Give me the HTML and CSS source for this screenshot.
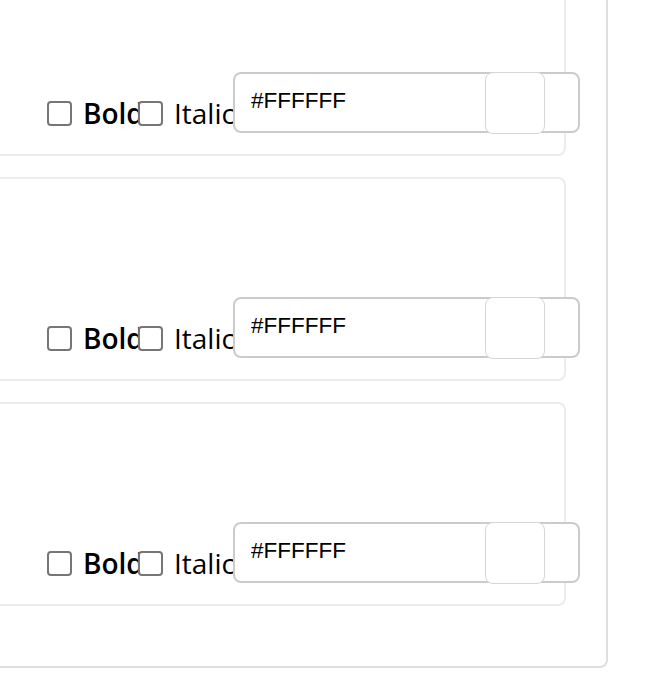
FILE: index.html
```html
<!DOCTYPE html>
<html>
<head>
<meta charset="utf-8">
<link rel="stylesheet" href="styles.css">
</head>
<body>
<div class="viewport">
  <div class="panel">
    <div class="card">
      <div class="row">
        <label class="opt"><input type="checkbox" class="cb"><span class="lbl bold">Bold</span></label>
        <label class="opt"><input type="checkbox" class="cb"><span class="lbl">Italic</span></label>
        <div class="color">
          <input type="text" class="hex" value="#FFFFFF">
          <span class="swatch"></span>
        </div>
      </div>
    </div>
    <div class="card">
      <div class="row">
        <label class="opt"><input type="checkbox" class="cb"><span class="lbl bold">Bold</span></label>
        <label class="opt"><input type="checkbox" class="cb"><span class="lbl">Italic</span></label>
        <div class="color">
          <input type="text" class="hex" value="#FFFFFF">
          <span class="swatch"></span>
        </div>
      </div>
    </div>
    <div class="card">
      <div class="row">
        <label class="opt"><input type="checkbox" class="cb"><span class="lbl bold">Bold</span></label>
        <label class="opt"><input type="checkbox" class="cb"><span class="lbl">Italic</span></label>
        <div class="color">
          <input type="text" class="hex" value="#FFFFFF">
          <span class="swatch"></span>
        </div>
      </div>
    </div>
  </div>
</div>
</body>
</html>
```

FILE: styles.css
```css
html, body {
  margin: 0;
  padding: 0;
  background: #fff;
}
.viewport {
  width: 653px;
  height: 681px;
  overflow: hidden;
  font-family: "Open Sans", "Noto Sans", sans-serif;
  color: #000;
}
.panel {
  box-sizing: border-box;
  width: 908px;
  margin-left: -300px;
  margin-top: -70px;
  border: 2px solid #dedede;
  border-radius: 8px;
  padding: 20px 40px 60px 20px;
  display: flex;
  flex-direction: column;
  gap: 21px;
}
.card {
  box-sizing: border-box;
  height: 204px;
  border: 2px solid #ececec;
  border-radius: 8px;
  padding: 0 0 21px 0;
  display: flex;
  flex-direction: column;
  justify-content: flex-end;
}
.row {
  display: flex;
  align-items: flex-end;
  padding-left: 323px;
}
.opt {
  width: 91px;
  flex: none;
  display: flex;
  align-items: center;
  height: 36px;
  margin-bottom: 2px;
  font-size: 28px;
  line-height: 36px;
  white-space: nowrap;
}
.cb {
  appearance: none;
  -webkit-appearance: none;
  box-sizing: border-box;
  width: 25px;
  height: 25px;
  margin: 0;
  border: 2px solid #767676;
  border-radius: 4px;
  background: #fff;
  flex: none;
  position: relative;
}
.lbl {
  margin-left: 11px;
}
.bold {
  font-weight: 600;
}
.color {
  position: relative;
  margin-left: 4px;
  flex: none;
  width: 347px;
  height: 61px;
}
.hex {
  box-sizing: border-box;
  width: 347px;
  height: 61px;
  margin: 0;
  border: 2px solid #cbcbcb;
  border-radius: 8px;
  padding: 0 0 4px 16px;
  font-family: "Liberation Sans", Arial, sans-serif;
  font-size: 22.5px;
  color: #000;
  background: #fff;
  outline: none;
}
.swatch {
  position: absolute;
  top: 0;
  right: 35px;
  box-sizing: border-box;
  width: 60px;
  height: 62px;
  border: 1px solid #d6d6d6;
  border-radius: 8px;
  background: #fff;
}
```
